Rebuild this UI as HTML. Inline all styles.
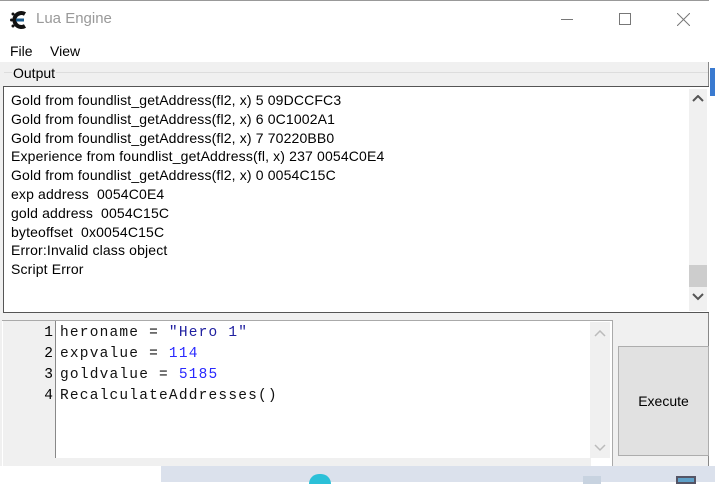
<!DOCTYPE html>
<html><head><style>
*{margin:0;padding:0;box-sizing:border-box}
body{width:715px;height:482px;overflow:hidden;background:#fff;position:relative;font-family:"Liberation Sans","DejaVu Sans",sans-serif;font-size:13px;color:#000}
.a{position:absolute}
.out div{height:18.8px;line-height:18.8px;font-size:14px;letter-spacing:0.15px;white-space:nowrap}
.code div{height:21px;line-height:21px;font-family:"Liberation Mono",monospace;font-size:14.5px;letter-spacing:1.2px;white-space:pre;color:#111}
.ln div{height:21px;line-height:21px;font-family:"Liberation Mono",monospace;font-size:14.5px;text-align:right;padding-right:3px}
.b{color:#2020a0}.n{color:#2a2aff}
</style></head><body>
<div class="a" style="left:0;top:0;width:709px;height:466px;background:#f0f0f0;border-right:1px solid #888"></div>
<div class="a" style="left:0;top:0;width:709px;height:62px;background:#fff"></div>
<div class="a" style="left:0;top:0;width:709px;height:1px;background:#999"></div>
<svg class="a" style="left:10px;top:9px" width="20" height="22" viewBox="0 0 20 22"><path d="M15 5 A7 7 0 1 0 15 17" fill="none" stroke="#111" stroke-width="4"/><path d="M6 11h8" stroke="#1a5a8a" stroke-width="3"/><circle cx="3" cy="5" r="1.5" fill="#111"/><circle cx="3" cy="17" r="1.5" fill="#111"/><circle cx="1.5" cy="11" r="1.5" fill="#111"/></svg>
<div class="a" style="left:36px;top:10px;font-size:15px;color:#999">Lua Engine</div>
<div class="a" style="left:561px;top:19px;width:12px;height:1px;background:#777"></div>
<div class="a" style="left:619px;top:13px;width:12px;height:12px;border:1px solid #777"></div>
<svg class="a" style="left:677px;top:13px" width="13" height="13"><path d="M0 0L13 13M13 0L0 13" stroke="#777" stroke-width="1"/></svg>
<div class="a" style="left:10px;top:43px;font-size:14px">File</div>
<div class="a" style="left:50px;top:43px;font-size:14px">View</div>
<div class="a" style="left:4px;top:72px;width:704px;height:1px;background:#ddd"></div>
<div class="a" style="left:12px;top:65px;background:#f0f0f0;padding:0 1px;font-size:14px">Output</div>
<div class="a" style="left:3px;top:86px;width:706px;height:227px;background:#fff;border:1px solid #555;border-right:none"></div>
<div class="a out" style="left:11px;top:91px">
<div>Gold from foundlist_getAddress(fl2, x) 5 09DCCFC3</div>
<div>Gold from foundlist_getAddress(fl2, x) 6 0C1002A1</div>
<div>Gold from foundlist_getAddress(fl2, x) 7 70220BB0</div>
<div>Experience from foundlist_getAddress(fl, x) 237 0054C0E4</div>
<div>Gold from foundlist_getAddress(fl2, x) 0 0054C15C</div>
<div>exp address&nbsp; 0054C0E4</div>
<div>gold address&nbsp; 0054C15C</div>
<div>byteoffset&nbsp; 0x0054C15C</div>
<div>Error:Invalid class object</div>
<div>Script Error</div>
</div>
<div class="a" style="left:689px;top:89px;width:18px;height:222px;background:#f0f0f0"></div>
<div class="a" style="left:689px;top:265px;width:18px;height:22px;background:#cdcdcd"></div>
<svg class="a" style="left:692px;top:95px" width="12" height="8"><path d="M1 6L6 1L11 6" fill="none" stroke="#555" stroke-width="2"/></svg>
<svg class="a" style="left:692px;top:293px" width="12" height="8"><path d="M1 1L6 6L11 1" fill="none" stroke="#555" stroke-width="2"/></svg>
<div class="a" style="left:2px;top:320px;width:611px;height:146px;border-top:1px solid #aaa;border-right:1px solid #aaa;background:#fff"></div>
<div class="a" style="left:3px;top:321px;width:53px;height:137px;background:#f0f0f0;border-right:1px solid #888"></div>
<div class="a ln" style="left:3px;top:323px;width:53px"><div>1</div><div>2</div><div>3</div><div>4</div></div>
<div class="a code" style="left:60px;top:323px">
<div>heroname = <span class="b">"Hero 1"</span></div>
<div>expvalue = <span class="n">114</span></div>
<div>goldvalue = <span class="n">5185</span></div>
<div>RecalculateAddresses()</div>
</div>
<div class="a" style="left:590px;top:322px;width:20px;height:136px;background:#f0f0f0"></div>
<svg class="a" style="left:594px;top:330px" width="12" height="8"><path d="M1 6L6 1L11 6" fill="none" stroke="#bbb" stroke-width="1.5"/></svg>
<svg class="a" style="left:594px;top:444px" width="12" height="8"><path d="M1 1L6 6L11 1" fill="none" stroke="#bbb" stroke-width="1.5"/></svg>
<div class="a" style="left:3px;top:458px;width:588px;height:8px;background:#f0f0f0"></div>
<div class="a" style="left:618px;top:346px;width:91px;height:110px;background:#e1e1e1;border:1px solid #adadad;text-align:center;line-height:108px;font-size:14px">Execute</div>
<div class="a" style="left:161px;top:466px;width:554px;height:16px;background:#dbe1ec"></div>
<div class="a" style="left:309px;top:474px;width:22px;height:10px;border-radius:11px 11px 0 0;background:#2bc0d8"></div>
<div class="a" style="left:583px;top:476px;width:18px;height:8px;background:#c8d3e0"></div>
<div class="a" style="left:676px;top:476px;width:20px;height:8px;background:#5fa0c8;border:2px solid #556"></div>
<div class="a" style="left:710px;top:68px;width:5px;height:28px;background:#3a7ad0"></div>
</body></html>
